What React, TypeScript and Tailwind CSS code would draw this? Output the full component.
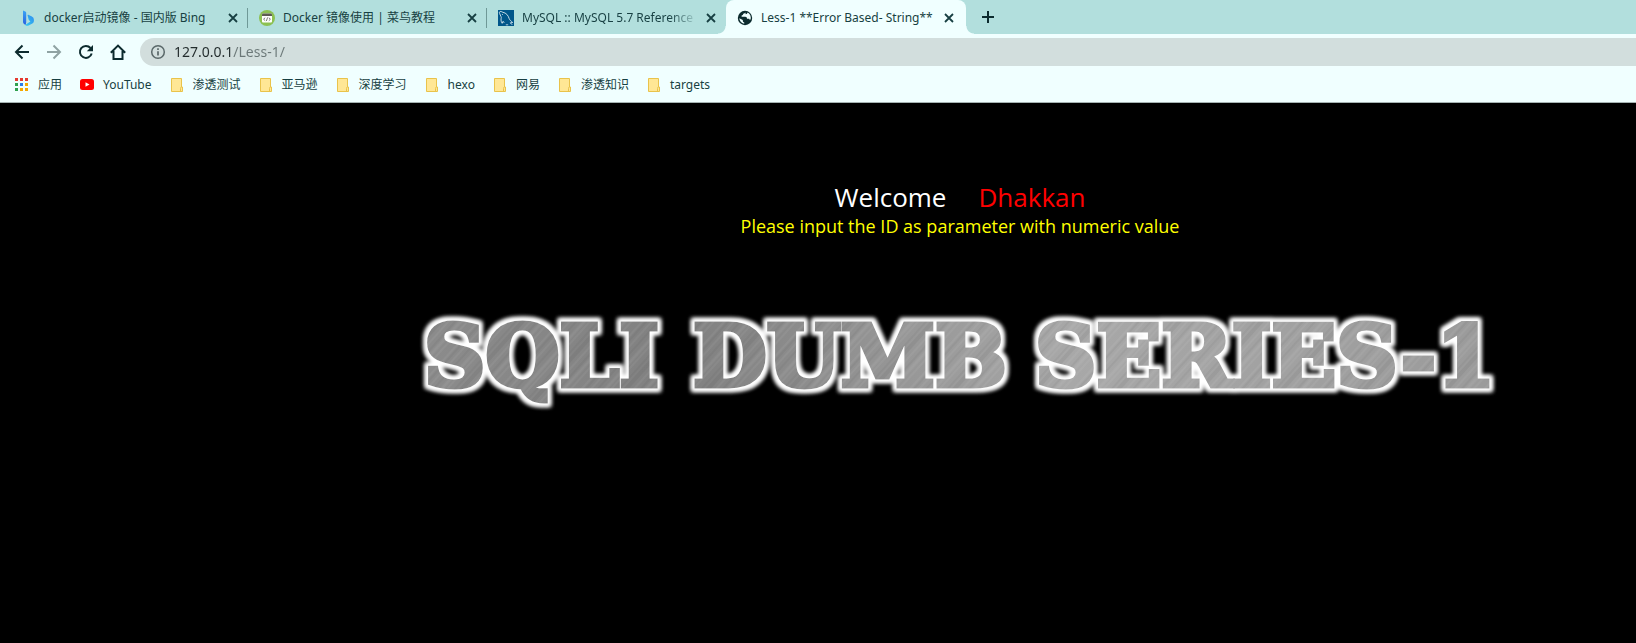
import type { ReactNode } from "react";

const CloseIcon = () => (
  <svg viewBox="0 0 10 10" className="size-2.5" fill="none" stroke="currentColor" strokeWidth="1.8">
    <path d="M1 1l8 8M9 1l-8 8" />
  </svg>
);

const BingIcon = () => (
  <svg viewBox="0 0 16 16" className="size-4">
    <defs>
      <linearGradient id="bing-stem" x1="0" y1="0" x2="0" y2="1">
        <stop offset="0" stopColor="#3aa5f5" />
        <stop offset="1" stopColor="#2a5fe0" />
      </linearGradient>
      <linearGradient id="bing-bowl" x1="1" y1="0" x2="0" y2="1">
        <stop offset="0" stopColor="#2f8df0" />
        <stop offset="1" stopColor="#35c9ee" />
      </linearGradient>
    </defs>
    <path d="M3 .6l2.300.8q.9.3.9 1.300v9.800L5.600 15l-1.200-.8Q3 13.300 3 12z" fill="url(#bing-stem)" />
    <path d="M7.600 5.400q-.3-.9.7-.6l3.600 1.600q2 1 2 3.300v1.300q0 1.700-1.500 2.500l-3.800 2q-1.700.8-3-.2l-.5-.4 5.300-3.500-1.700-1.700z" fill="url(#bing-bowl)" />
  </svg>
);

const RunoobIcon = () => (
  <svg viewBox="0 0 16 16" className="size-4">
    <circle cx="8" cy="8" r="8" fill="#8cc152" />
    <rect x="3" y="3.600" width="10" height="9" rx="1" fill="#fff" />
    <path d="M3 6V4.600q0-1 1-1h8q1 0 1 1V6z" fill="#5d5b52" />
    <path d="M6.200 7.700L4.600 9.200l1.600 1.500M9.800 7.700l1.600 1.500-1.600 1.500M8.600 7.400l-1.200 3.600" fill="none" stroke="#5d5b52" strokeWidth=".8" />
  </svg>
);

const MySqlIcon = () => (
  <svg viewBox="0 0 16 16" className="size-4">
    <rect width="16" height="16" fill="#00568a" />
    <path
      d="M4.200 13.300C2.600 11 3 9 3.300 7.600 3 6 1.500 4 1.400 2.300 1.800.9 3.600 1.500 4.800 2.300c3.400.6 5.400 3 6.400 6.400.6 1.600 1.900 2.300 3.500 3.800l-2.400.3 1.900 2M4.200 13.300l.9-2 1.100 1.500M4.200 4.200l.7.8"
      fill="none"
      stroke="#d9e8ef"
      strokeWidth=".9"
      strokeLinejoin="round"
    />
    <path d="M7.800 14.800h2.400" stroke="#d9e8ef" strokeWidth=".8" />
  </svg>
);

const GlobeIcon = () => (
  <svg viewBox="0 0 16 16" className="size-4">
    <circle cx="8" cy="8" r="7.200" fill="#0c2b2e" />
    <path
      d="M8.300 2.300c-.2 1-.9 1.300-2 1.500-.2 1.200-.7 1.600-1.700 1.700v1.300h3.600c1.300 0 1.800.8 1.800 1.900h1.500c.8 0 1.200.5 1.200 1.200l1-.6c.6-2.700-.6-5.700-3.300-6.700 0 1.200-.6 1.600-1.700 1.600zM2.300 8.300c.1 2.500 2 5 4.900 5.400v-1.400c-1 0-1.400-.6-1.400-1.500v-.8z"
      fill="#f0ffff"
    />
  </svg>
);

const AppsIcon = () => {
  const colors = ["#e53b30", "#e53b30", "#e53b30", "#2fa14f", "#2b7de9", "#f5a800", "#2fa14f", "#f5a800", "#f5a800"];
  return (
    <svg viewBox="0 0 16 16" className="size-4">
      {colors.map((c, i) => (
        <rect key={i} x={1 + (i % 3) * 5} y={1 + Math.floor(i / 3) * 5} width="3" height="3" fill={c} />
      ))}
    </svg>
  );
};

const YouTubeIcon = () => (
  <svg viewBox="0 0 16 16" className="size-4">
    <rect x="1" y="2" width="14" height="11" rx="2.500" fill="#f00" />
    <path d="M6.500 5.200v4.600l4-2.300z" fill="#fff" />
  </svg>
);

const FolderIcon = () => (
  <svg viewBox="0 0 16 16" className="size-4">
    <path d="M2.500 1.500h10v8.500h1v4.500h-11z" fill="#ffe795" stroke="#e9c34b" />
    <path d="M11.500 14v-2.500q0-1.500 1-1.500" fill="none" stroke="#e9c34b" />
  </svg>
);

type TabProps = { title: string; icon: ReactNode; active?: boolean; divider?: boolean; fade?: boolean };

const Tab = ({ title, icon, active, divider, fade }: TabProps) => (
  <div
    className={
      active
        ? "relative flex h-full w-60 items-center rounded-t-lg bg-[#f0ffff] pt-0.5 pr-2.5 pl-[11px]"
        : "relative flex h-full w-[239px] items-center pt-0.5 pr-2 pl-[11px] first:w-[248px] first:pl-5"
    }
  >
    {active && (
      <>
        <span className="absolute bottom-0 -left-2 size-2 bg-[radial-gradient(circle_at_0_0,transparent_7px,#f0ffff_8px)]" />
        <span className="absolute -right-2 bottom-0 size-2 bg-[radial-gradient(circle_at_100%_0,transparent_7px,#f0ffff_8px)]" />
      </>
    )}
    <button
      type="button"
      role="tab"
      aria-selected={!!active}
      className="flex min-w-0 flex-1 items-center gap-2 text-left text-xs whitespace-nowrap"
    >
      <span className="shrink-0">{icon}</span>
      <span className={fade ? "[mask-image:linear-gradient(90deg,#000_86%,#0003)]" : ""}>{title}</span>
    </button>
    <button type="button" aria-label={`Close ${title}`} className="shrink-0 pr-0.5 pl-1">
      <CloseIcon />
    </button>
    {divider && <span className="absolute top-2 right-0 h-5 w-px bg-[#6f9997]" />}
  </div>
);

const tabs: TabProps[] = [
  { title: "docker启动镜像 - 国内版 Bing", icon: <BingIcon />, divider: true },
  { title: "Docker 镜像使用 | 菜鸟教程", icon: <RunoobIcon />, divider: true },
  { title: "MySQL :: MySQL 5.7 Reference", icon: <MySqlIcon />, fade: true },
  { title: "Less-1 **Error Based- String**", icon: <GlobeIcon />, active: true },
];

const bookmarks: { label: string; icon: ReactNode }[] = [
  { label: "应用", icon: <AppsIcon /> },
  { label: "YouTube", icon: <YouTubeIcon /> },
  { label: "渗透测试", icon: <FolderIcon /> },
  { label: "亚马逊", icon: <FolderIcon /> },
  { label: "深度学习", icon: <FolderIcon /> },
  { label: "hexo", icon: <FolderIcon /> },
  { label: "网易", icon: <FolderIcon /> },
  { label: "渗透知识", icon: <FolderIcon /> },
  { label: "targets", icon: <FolderIcon /> },
];

const TabStrip = () => (
  <div role="tablist" className="flex h-[34px] items-center bg-[#b2dfdd]">
    {tabs.map((t) => (
      <Tab key={t.title} {...t} />
    ))}
    <button type="button" aria-label="New tab" className="ml-4 text-[#0c2b2e]">
      <svg viewBox="0 0 12 12" className="size-3" stroke="currentColor" strokeWidth="2">
        <path d="M6 0v12M0 6h12" />
      </svg>
    </button>
  </div>
);

const Toolbar = () => (
  <div className="flex h-9 items-center pl-3.5">
    <div className="flex items-center gap-4 pr-3.5 text-[#0c2b2e]">
      <button type="button" aria-label="Back">
        <svg viewBox="0 0 16 16" className="size-4" fill="none" stroke="currentColor" strokeWidth="2">
          <path d="M15 8H2.500M8.500 1.500L2 8l6.500 6.500" />
        </svg>
      </button>
      <button type="button" aria-label="Forward" className="text-[#8fa3a3]">
        <svg viewBox="0 0 16 16" className="size-4" fill="none" stroke="currentColor" strokeWidth="2">
          <path d="M1 8h12.500M7.500 1.500L14 8l-6.500 6.500" />
        </svg>
      </button>
      <button type="button" aria-label="Reload">
        <svg viewBox="0 0 16 16" className="size-4" fill="none" stroke="currentColor" strokeWidth="2">
          <path d="M13.700 9.500A6 6 0 1 1 12.500 4" />
          <path d="M15 1v6.200H8.800z" fill="currentColor" stroke="none" />
        </svg>
      </button>
      <button type="button" aria-label="Home">
        <svg viewBox="0 0 16 16" className="size-4" fill="none" stroke="currentColor" strokeWidth="2">
          <path d="M.8 8.800L8 1.600l7.200 7.200M3.500 7v8h9V7" />
        </svg>
      </button>
    </div>
    <label className="flex h-7 flex-1 items-center gap-2 rounded-l-full bg-[#d2dedd] pl-2.5">
      <svg viewBox="0 0 16 16" className="size-4 text-[#5a6869]" fill="none" stroke="currentColor" strokeWidth="1.500">
        <circle cx="8" cy="8" r="6.300" />
        <path d="M8 7.200v4.300M8 4.300v1.700" strokeWidth="1.700" />
      </svg>
      <input
        type="text"
        aria-label="Address"
        defaultValue="127.0.0.1/Less-1/"
        className="min-w-0 flex-1 bg-[linear-gradient(90deg,#222b2c_58px,#6a7777_58px)] bg-clip-text text-sm text-transparent outline-none"
      />
    </label>
  </div>
);

const Bookmarks = () => (
  <nav className="flex h-[33px] items-center gap-[17px] border-b border-[#a5b3b2] pb-0.5 pl-3.5 text-xs">
    {bookmarks.map((b) => (
      <a key={b.label} href="#" className="flex items-center gap-2 whitespace-nowrap">
        {b.icon}
        {b.label}
      </a>
    ))}
  </nav>
);

const Banner = () => (
  <svg viewBox="0 0 1100 110" className="w-[1100px] max-w-full">
    <defs>
      <linearGradient id="steel-shade" x1="0" y1="0" x2="1" y2="0">
        <stop offset="0" stopColor="#8c8c8c" />
        <stop offset=".25" stopColor="#808080" />
        <stop offset=".6" stopColor="#a8a8a8" />
        <stop offset="1" stopColor="#9a9a9a" />
      </linearGradient>
      <pattern id="steel" width="1100" height="110" patternUnits="userSpaceOnUse">
        <rect width="1100" height="110" fill="url(#steel-shade)" />
        <rect width="1100" height="110" fill="url(#brush)" />
      </pattern>
      <pattern id="brush" width="61" height="200" patternUnits="userSpaceOnUse" patternTransform="rotate(42)">
        <path d="M2 0v200M9 0v200M24 0v200M41 0v200M55 0v200" stroke="#fff" strokeOpacity=".1" />
        <path d="M5 0v200M14 0v200M30 0v200M46 0v200" stroke="#000" strokeOpacity=".08" />
        <path d="M20 0v200M50 0v200" stroke="#fff" strokeOpacity=".07" strokeWidth="3" />
        <path d="M35 0v200" stroke="#000" strokeOpacity=".05" strokeWidth="4" />
      </pattern>
      <filter id="halo" x="-2%" y="-20%" width="104%" height="140%">
        <feMorphology in="SourceAlpha" operator="dilate" radius="3" result="wide" />
        <feGaussianBlur in="wide" stdDeviation="2" result="soft" />
        <feFlood floodColor="#fff" />
        <feComposite in2="soft" operator="in" result="glow" />
        <feMerge>
          <feMergeNode in="glow" />
          <feMergeNode in="glow" />
          <feMergeNode in="SourceGraphic" />
        </feMerge>
      </filter>
    </defs>
    <text
      y="83"
      fontSize="85"
      fontWeight="bold"
      fill="url(#steel)"
      stroke="url(#steel)"
      strokeWidth="5"
      filter="url(#halo)"
      className="font-['DejaVu_Serif',serif]"
    >
      <tspan x="14">SQLI </tspan>
      <tspan x="283">DUMB </tspan>
      <tspan x="625">SERIES-1</tspan>
    </text>
  </svg>
);

export default function App() {
  return (
    <div className="flex min-h-screen flex-col bg-black font-['Noto_Sans','Noto_Sans_CJK_SC',sans-serif]">
      <header className="bg-[#f0ffff] text-[#173f42]">
        <TabStrip />
        <Toolbar />
        <Bookmarks />
      </header>
      <main className="flex flex-1 flex-col items-center pt-[78px] pl-[284px] font-['Open_Sans','Noto_Sans',sans-serif]">
        <h1 className="flex gap-8 text-[26px] leading-8 text-white">
          Welcome <span className="text-[#f00]">Dhakkan</span>
        </h1>
        <p className="text-[18px] leading-[26px] text-[#ff0]">Please input the ID as parameter with numeric value</p>
        <div className="mt-16 flex w-full justify-center">
          <Banner />
        </div>
      </main>
    </div>
  );
}
